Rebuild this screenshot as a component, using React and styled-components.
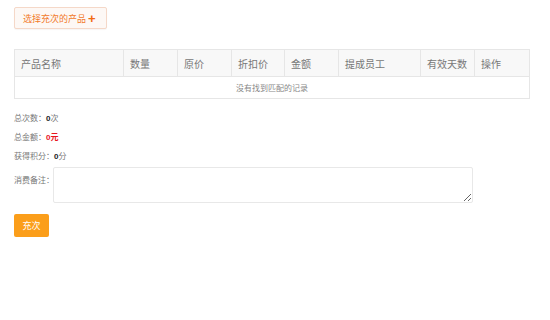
import React from "react"
import styled, { createGlobalStyle } from "styled-components"

const Global = createGlobalStyle`
  body {
    margin: 0;
    background: #fff;
    font-family: "Microsoft YaHei", "Noto Sans CJK SC", "Liberation Sans", sans-serif;
    color: #555;
  }
`

const columns = [
  { title: "产品名称", width: 109 },
  { title: "数量", width: 54 },
  { title: "原价", width: 54 },
  { title: "折扣价", width: 53 },
  { title: "金额", width: 54 },
  { title: "提成员工", width: 82 },
  { title: "有效天数", width: 54 },
  { title: "操作", width: 55 },
]

export default function App() {
  return (
    <Page>
      <Global />
      <PickButton>
        选择充次的产品 <Plus>+</Plus>
      </PickButton>

      <Table>
        <colgroup>
          {columns.map((c) => (
            <col key={c.title} style={{ width: c.width }} />
          ))}
        </colgroup>
        <thead>
          <tr>
            {columns.map((c) => (
              <Th key={c.title}>{c.title}</Th>
            ))}
          </tr>
        </thead>
        <tbody>
          <tr>
            <Empty colSpan={columns.length}>没有找到匹配的记录</Empty>
          </tr>
        </tbody>
      </Table>

      <Summary>
        <Line>
          总次数：<Num>0</Num>次
        </Line>
        <Line>
          总金额：<Num $red>0元</Num>
        </Line>
        <Line>
          获得积分：<Num>0</Num>分
        </Line>
      </Summary>

      <RemarkRow>
        <RemarkLabel>消费备注：</RemarkLabel>
        <Remark />
      </RemarkRow>

      <Submit>充次</Submit>
    </Page>
  )
}

const Page = styled.div`
  padding: 7px 14px 0;
  display: flex;
  flex-direction: column;
  align-items: flex-start;
`

const PickButton = styled.button`
  box-sizing: border-box;
  height: 22px;
  width: 93px;
  padding: 0 0 0 8px;
  display: flex;
  align-items: center;
  gap: 2px;
  border: 1px solid #f5d8c8;
  border-radius: 2px;
  background: #fdf8f5;
  color: #f27a2a;
  font-family: inherit;
  font-size: 9px;
  box-shadow: 0 1px 1px rgba(0, 0, 0, 0.04);
`

const Plus = styled.span`
  font-family: "Liberation Sans", sans-serif;
  font-weight: 900;
  font-size: 13px;
  color: #f26a10;
  line-height: 1;
`

const Table = styled.table`
  margin-top: 20px;
  width: 515px;
  border-collapse: collapse;
  table-layout: fixed;
  border: 1px solid #e6e6e6;
`

const Th = styled.th`
  height: 26px;
  padding: 0 0 0 6px;
  background: #f8f8f8;
  border: 1px solid #e6e6e6;
  text-align: left;
  font-weight: normal;
  font-size: 10px;
  color: #777;
`

const Empty = styled.td`
  height: 21px;
  padding: 0;
  text-align: center;
  font-size: 8px;
  color: #888;
  border: 1px solid #e6e6e6;
`

const Summary = styled.div`
  margin-top: 9px;
  display: flex;
  flex-direction: column;
`

const Line = styled.div`
  height: 19px;
  line-height: 19px;
  font-size: 8px;
  color: #777;
`

const Num = styled.b`
  color: ${(p) => (p.$red ? "#e8141e" : "#222")};
  font-weight: bold;
  font-family: "Liberation Sans", "Noto Sans CJK SC", sans-serif;
`

const RemarkRow = styled.div`
  margin-top: 2px;
  display: flex;
  align-items: flex-start;
`

const RemarkLabel = styled.div`
  width: 39px;
  flex-shrink: 0;
  white-space: nowrap;
  padding-top: 7px;
  font-size: 8px;
  color: #777;
`

const Remark = styled.textarea`
  box-sizing: border-box;
  width: 420px;
  height: 36px;
  border: 1px solid #e8e8e8;
  border-radius: 2px;
  margin: 0;
  resize: vertical;
`

const Submit = styled.button`
  margin-top: 11px;
  box-sizing: border-box;
  width: 35px;
  height: 23px;
  border: none;
  border-radius: 2px;
  background: #fb9e1a;
  color: #fff;
  font-family: inherit;
  font-size: 9px;
  padding: 0;
`
